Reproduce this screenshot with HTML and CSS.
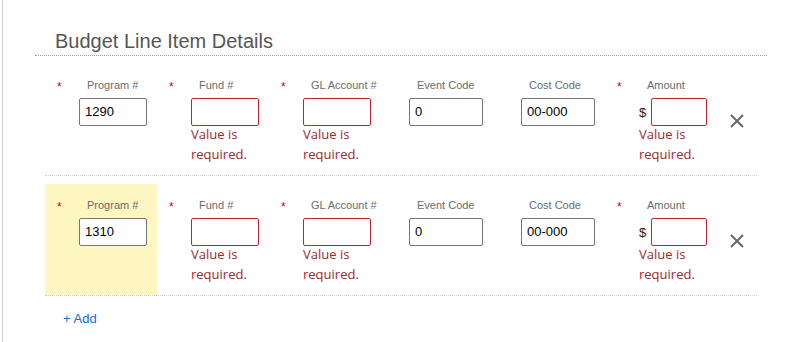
FILE: index.html
```html
<!DOCTYPE html>
<html>
<head>
<meta charset="utf-8">
<link rel="stylesheet" href="styles.css">
</head>
<body>
<div class="page">
  <section class="section">
    <h2 class="heading">Budget Line Item Details</h2>
    <div class="rows">
      <div class="row">
        <div class="col req"><span class="mark">*</span><div class="field"><div class="label">Program #</div><div class="input">1290</div></div></div>
        <div class="col req"><span class="mark">*</span><div class="field"><div class="label">Fund #</div><div class="input error"></div><div class="msg">Value is required.</div></div></div>
        <div class="col req"><span class="mark">*</span><div class="field"><div class="label">GL Account #</div><div class="input error"></div><div class="msg">Value is required.</div></div></div>
        <div class="col"><span class="mark"></span><div class="field"><div class="label">Event Code</div><div class="input">0</div></div></div>
        <div class="col"><span class="mark"></span><div class="field"><div class="label">Cost Code</div><div class="input">00-000</div></div></div>
        <div class="col req"><span class="mark">*</span><div class="field"><div class="label">Amount</div><div class="money"><span class="dollar">$</span><div class="input error"></div></div><div class="msg">Value is required.</div></div></div>
        <div class="remove"><svg width="14" height="14" viewBox="0 0 14 14"><path d="M1 1L13 13M13 1L1 13" stroke="#6a6a6a" stroke-width="2" fill="none"/></svg></div>
      </div>
      <div class="row">
        <div class="col req hl"><span class="mark">*</span><div class="field"><div class="label">Program #</div><div class="input">1310</div></div></div>
        <div class="col req"><span class="mark">*</span><div class="field"><div class="label">Fund #</div><div class="input error"></div><div class="msg">Value is required.</div></div></div>
        <div class="col req"><span class="mark">*</span><div class="field"><div class="label">GL Account #</div><div class="input error"></div><div class="msg">Value is required.</div></div></div>
        <div class="col"><span class="mark"></span><div class="field"><div class="label">Event Code</div><div class="input">0</div></div></div>
        <div class="col"><span class="mark"></span><div class="field"><div class="label">Cost Code</div><div class="input">00-000</div></div></div>
        <div class="col req"><span class="mark">*</span><div class="field"><div class="label">Amount</div><div class="money"><span class="dollar">$</span><div class="input error"></div></div><div class="msg">Value is required.</div></div></div>
        <div class="remove"><svg width="14" height="14" viewBox="0 0 14 14"><path d="M1 1L13 13M13 1L1 13" stroke="#6a6a6a" stroke-width="2" fill="none"/></svg></div>
      </div>
    </div>
    <a class="add" href="#">+ Add</a>
  </section>
</div>
</body>
</html>
```

FILE: styles.css
```css
html, body {
  margin: 0;
  padding: 0;
  background: #fff;
}
body {
  font-family: "Liberation Sans", Arial, sans-serif;
}
.page {
  margin-left: 2px;
  border-left: 1px solid #d2d2d2;
  height: 342px;
  box-sizing: border-box;
  overflow: hidden;
}
.section {
  margin-left: 32px;
  width: 732px;
  padding-top: 29px;
}
.heading {
  margin: 0;
  padding: 0 0 2px 20px;
  font-size: 20px;
  line-height: 24px;
  font-weight: normal;
  color: #555;
  border-bottom: 1px dotted #9a9a9a;
}
.rows {
  margin-left: 10px;
  width: 712px;
}
.row {
  display: flex;
  height: 111px;
  margin-top: 8px;
  border-bottom: 1px dotted #d0d0d0;
}
.col {
  display: flex;
  width: 112px;
  box-sizing: border-box;
  padding: 14px 10px 0 12px;
}
.col.hl {
  background: #fdf6c1;
}
.mark {
  width: 16px;
  flex: none;
  color: #b3121b;
  font-size: 12px;
  line-height: 12px;
  padding-top: 3px;
}
.col.req .mark {
  width: 22px;
}
.field {
  flex: 1;
  min-width: 0;
}
.label {
  padding-left: 8px;
  font-size: 11px;
  line-height: 14px;
  color: #6b6b6b;
  white-space: nowrap;
}
.input {
  margin-top: 6px;
  height: 28px;
  box-sizing: border-box;
  border: 1px solid #777;
  border-radius: 2px;
  padding-left: 5px;
  font-size: 13px;
  line-height: 26px;
  color: #000;
  background: #fff;
}
.input.error {
  border-color: #c0262e;
}
.money {
  display: flex;
  align-items: flex-end;
}
.money .input {
  flex: 1;
}
.dollar {
  width: 12px;
  font-size: 13px;
  line-height: 14px;
  color: #222;
  padding-bottom: 6px;
}
.msg {
  margin-top: -2px;
  font-family: "Open Sans", sans-serif;
  font-size: 13px;
  line-height: 20px;
  color: #a4262c;
}
.remove {
  padding: 50px 0 0 13px;
}
.remove svg {
  display: block;
}
.add {
  display: inline-block;
  margin: 15px 0 0 28px;
  font-size: 13px;
  line-height: 16px;
  color: #1769d8;
  text-decoration: none;
}
```
